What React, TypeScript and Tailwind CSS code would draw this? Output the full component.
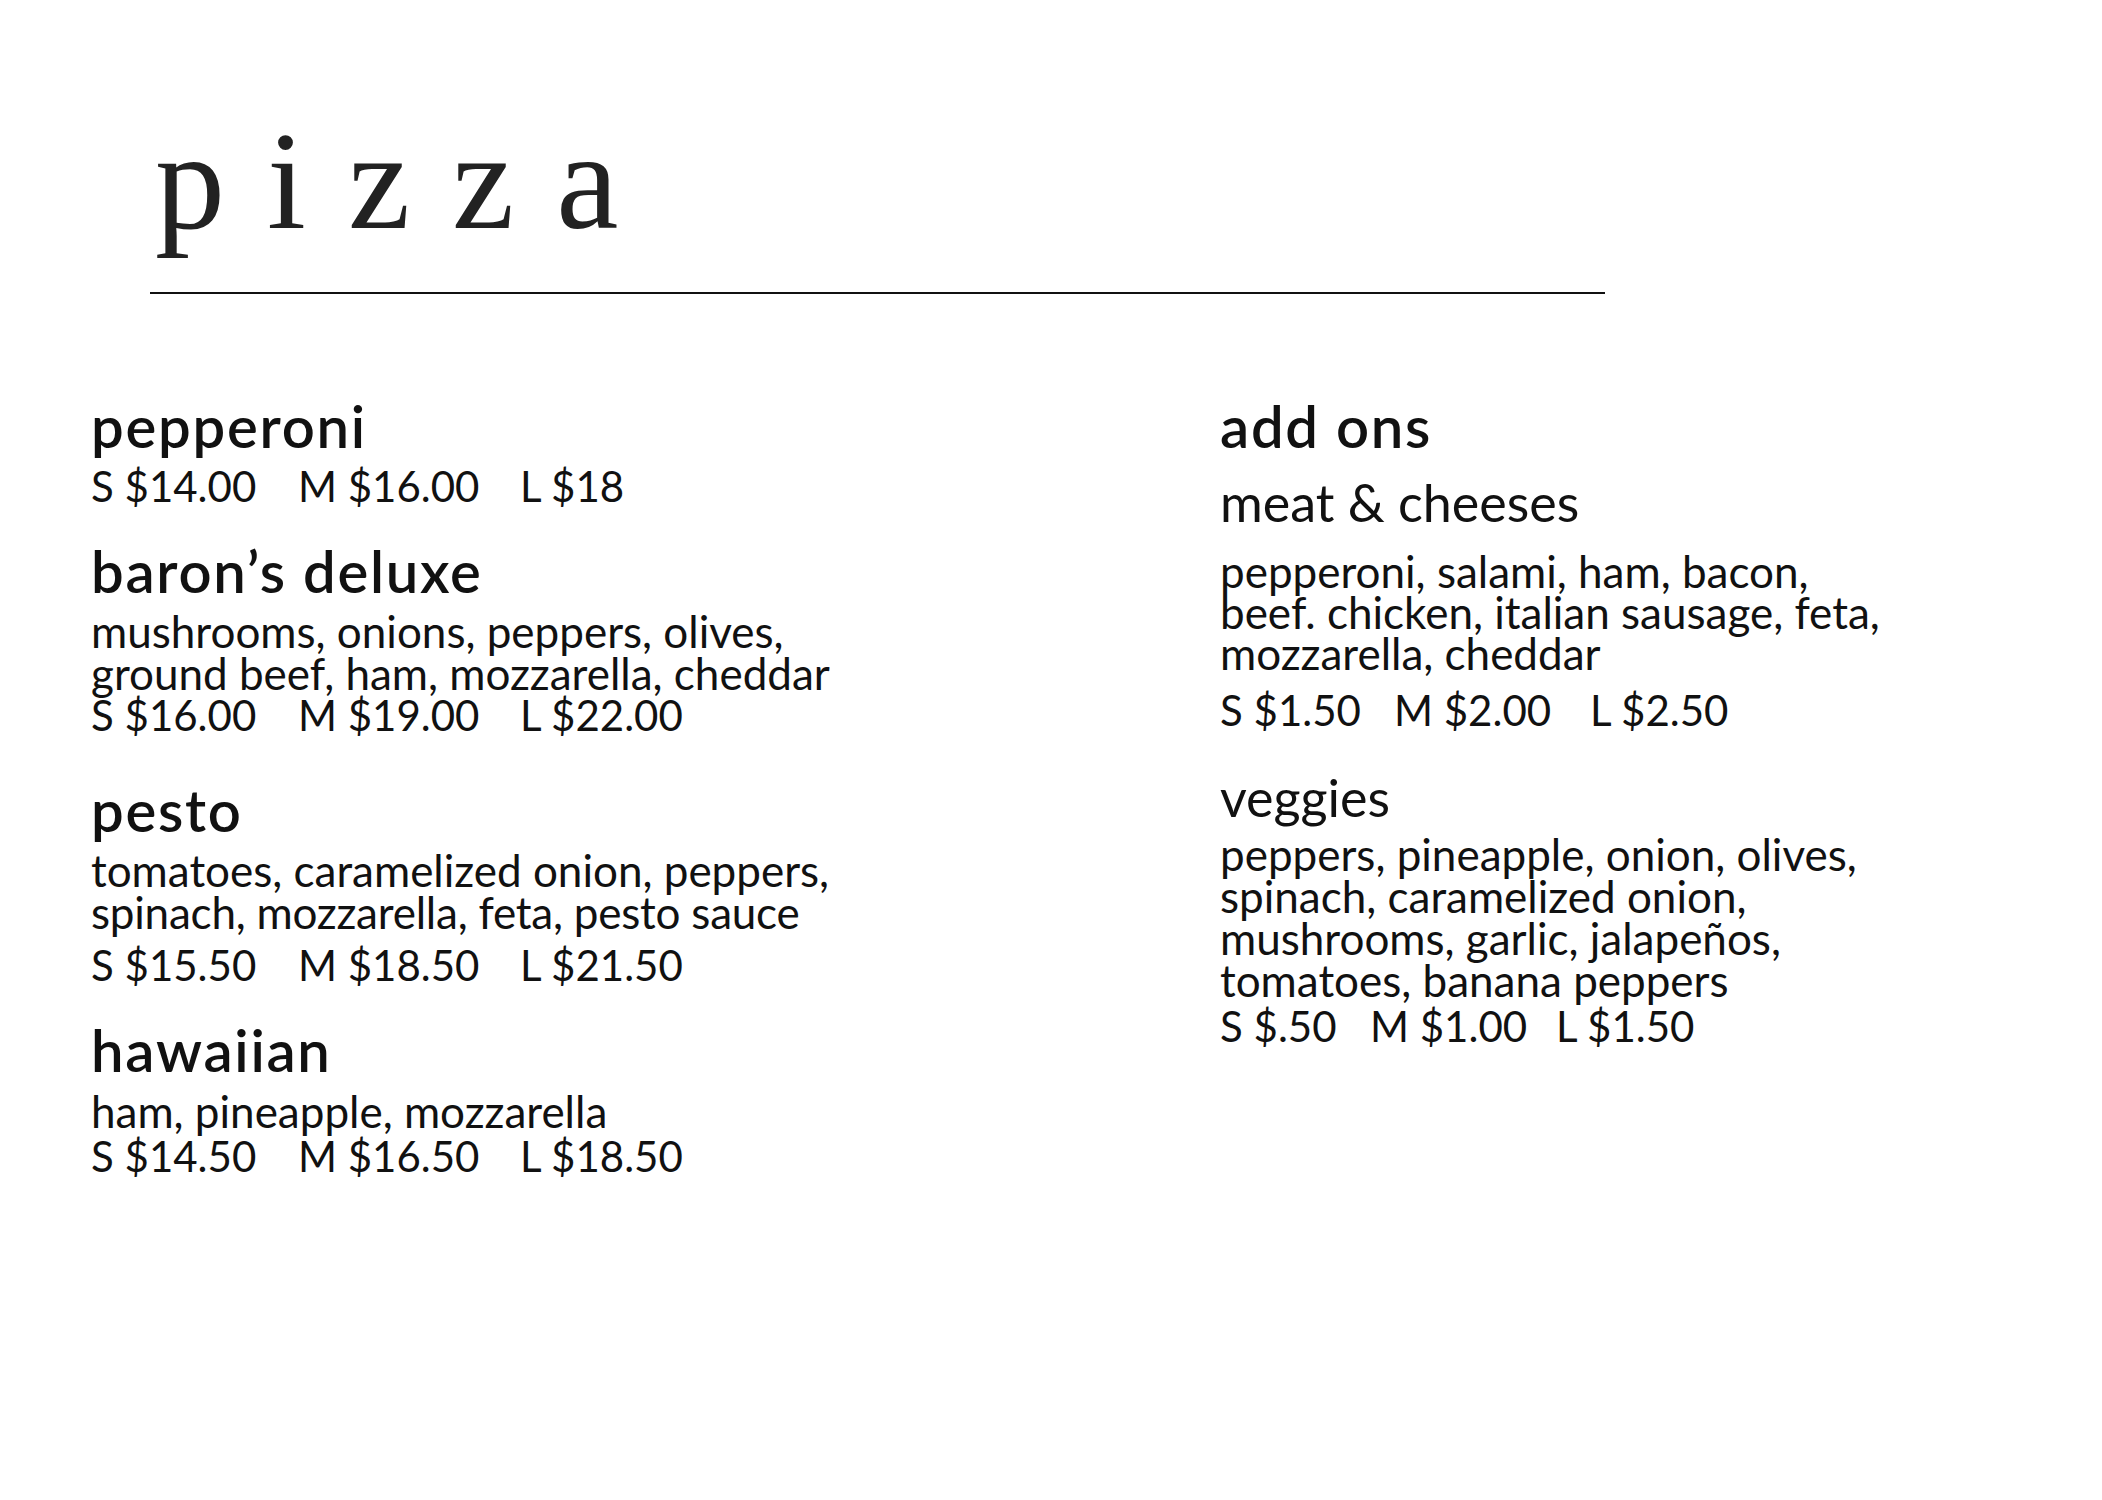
import React from "react";

const sans = { fontFamily: '"Lato", "Noto Sans", sans-serif' };

function Prices({ items, widths }: { items: string[]; widths: string[] }) {
  return (
    <div className="flex whitespace-nowrap">
      {items.map((t, i) => (
        <span key={i} className={widths[i]}>
          {t}
        </span>
      ))}
    </div>
  );
}

const head = "text-[58px] leading-[54px] font-semibold tracking-[0.03em]";
const sub = "text-[52px] leading-[46px]";
const desc = "text-[44px]";
const price = "text-[42px] leading-[42px]";

export default function App() {
  return (
    <div
      className="w-[2102px] h-[1500px] bg-white text-[#111] overflow-hidden"
      style={sans}
    >
      <div className="pl-[150px] pt-[111px]">
        <div
          className="pl-[5px] text-[140px] leading-[140px] tracking-[42px] text-[#222]"
          style={{ fontFamily: '"Liberation Serif", serif' }}
        >
          pizza
        </div>
        <div className="mt-[41px] w-[1455px] h-[2px] bg-[#111]" />
      </div>

      <div className="flex mt-[105px] pl-[91px]">
        {/* left column */}
        <div className="w-[1126px] flex flex-col">
          <div className={head}>pepperoni</div>
          <div className={`mt-[12px] ${price}`}>
            <Prices items={["S $14.00", "M $16.00", "L $18"]} widths={["w-[207px]", "w-[222px]", ""]} />
          </div>
          <div className={`mt-[37px] ${head}`}>baron’s deluxe</div>
          <div className={`mt-[12px] ${desc} leading-[42px]`}>
            <div>mushrooms, onions, peppers, olives,</div>
            <div>ground beef, ham, mozzarella, cheddar</div>
            <div className="text-[42px]">
              <Prices items={["S $16.00", "M $19.00", "L $22.00"]} widths={["w-[207px]", "w-[222px]", ""]} />
            </div>
          </div>
          <div className={`mt-[47px] ${head}`}>pesto</div>
          <div className={`mt-[12px] ${desc} leading-[42px]`}>
            <div>tomatoes, caramelized onion, peppers,</div>
            <div className="tracking-[-0.005em]">spinach, mozzarella, feta, pesto sauce</div>
          </div>
          <div className={`mt-[11px] ${price}`}>
            <Prices items={["S $15.50", "M $18.50", "L $21.50"]} widths={["w-[207px]", "w-[222px]", ""]} />
          </div>
          <div className={`mt-[37px] ${head}`}>hawaiian</div>
          <div className={`mt-[12px] ${desc} leading-[45px]`}>
            <div>ham, pineapple, mozzarella</div>
            <div className="text-[42px]">
              <Prices items={["S $14.50", "M $16.50", "L $18.50"]} widths={["w-[207px]", "w-[222px]", ""]} />
            </div>
          </div>
        </div>

        {/* right column */}
        <div className="flex flex-col pl-[3px]">
          <div className={head}>add ons</div>
          <div className={`mt-[26px] ${sub}`}>meat &amp; cheeses</div>
          <div className={`mt-[26px] ${desc} leading-[41px]`}>
            <div>pepperoni, salami, ham, bacon,</div>
            <div>beef. chicken, italian sausage, feta,</div>
            <div>mozzarella, cheddar</div>
          </div>
          <div className={`mt-[15px] ${price}`}>
            <Prices items={["S $1.50", "M $2.00", "L $2.50"]} widths={["w-[174px]", "w-[196px]", ""]} />
          </div>
          <div className={`mt-[43px] ${sub}`}>veggies</div>
          <div className={`mt-[13px] ${desc} leading-[42px]`}>
            <div>peppers, pineapple, onion, olives,</div>
            <div>spinach, caramelized onion,</div>
            <div>mushrooms, garlic, jalapeños,</div>
            <div>tomatoes, banana peppers</div>
          </div>
          <div className={`mt-[4px] ${price}`}>
            <Prices items={["S $.50", "M $1.00", "L $1.50"]} widths={["w-[150px]", "w-[186px]", ""]} />
          </div>
        </div>
      </div>
    </div>
  );
}
